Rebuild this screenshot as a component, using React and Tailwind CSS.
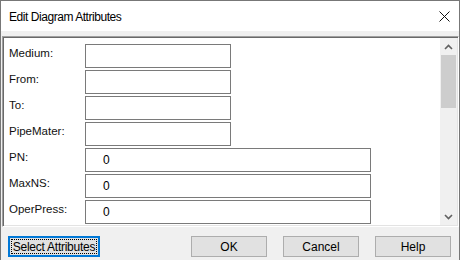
import React from "react";

const rows = [
  { label: "Medium:", value: "", w: "w-[146px]" },
  { label: "From:", value: "", w: "w-[146px]" },
  { label: "To:", value: "", w: "w-[146px]" },
  { label: "PipeMater:", value: "", w: "w-[146px]" },
  { label: "PN:", value: "0", w: "w-[286px]" },
  { label: "MaxNS:", value: "0", w: "w-[286px]" },
  { label: "OperPress:", value: "0", w: "w-[286px]" },
];

function Btn({ children, focused }) {
  if (focused) {
    return (
      <div className="h-[21px] w-[92px] border-2 border-[#0078d7] bg-[#e1e1e1] p-[1px]">
        <div className="flex h-full w-full items-center justify-center overflow-visible whitespace-nowrap border border-dotted border-black text-[12px] leading-none tracking-[-0.25px] text-black">
          {children}
        </div>
      </div>
    );
  }
  return (
    <div className="flex h-[21px] w-[76px] items-center justify-center whitespace-nowrap border border-[#adadad] bg-[#e1e1e1] text-[12px] leading-none text-black">
      {children}
    </div>
  );
}

export default function App() {
  return (
    <div
      className="flex h-[260px] w-[460px] flex-col overflow-hidden border-x border-t border-[#777777] bg-[#f0f0f0]"
      style={{ fontFamily: '"Liberation Sans", Arial, sans-serif' }}
    >
      <div className="flex h-[30px] shrink-0 items-center justify-between bg-white pl-[8px] pr-[9px]">
        <span className="pt-[1px] text-[12px] tracking-[-0.45px] text-black">Edit Diagram Attributes</span>
        <svg width="11" height="11" viewBox="0 0 11 11" className="mt-[1px]">
          <path d="M0.5 0.5 L10.5 10.5 M10.5 0.5 L0.5 10.5" stroke="#111" strokeWidth="1" />
        </svg>
      </div>
      <div className="h-[5px] shrink-0" />
      <div className="ml-[1px] flex h-[191px] shrink-0 border border-[#a0a0a0] border-b-white border-r-white bg-white shadow-[inset_1px_1px_0_#696969,inset_-1px_-1px_0_#e3e3e3] p-[1px]">
        <div className="flex flex-1 flex-col gap-[2px] overflow-hidden pl-[5px] pt-[6px]">
          {rows.map((r) => (
            <div key={r.label} className="flex h-[24px] shrink-0 items-start">
              <div className="w-[76px] pt-[2px] text-[11.5px] leading-[14px] text-[#111]">{r.label}</div>
              <div className={`flex h-[24px] items-center border border-[#7a7a7a] bg-white pl-[17px] text-[12px] text-black ${r.w}`}>
                {r.value}
              </div>
            </div>
          ))}
        </div>
        <div className="flex w-[17px] shrink-0 flex-col bg-[#f0f0f0]">
          <div className="flex h-[17px] items-center justify-center">
            <svg width="9" height="6" viewBox="0 0 9 6">
              <path d="M1 5 L4.5 1.5 L8 5" fill="none" stroke="#606060" strokeWidth="1.6" />
            </svg>
          </div>
          <div className="mx-[1px] h-[53px] bg-[#cdcdcd]" />
          <div className="flex-1" />
          <div className="flex h-[17px] items-center justify-center">
            <svg width="9" height="6" viewBox="0 0 9 6">
              <path d="M1 1 L4.5 4.5 L8 1" fill="none" stroke="#606060" strokeWidth="1.6" />
            </svg>
          </div>
        </div>
      </div>
      <div className="flex flex-1 items-start pl-[7px] pr-[8px] pt-[9px]">
        <Btn focused>Select Attributes</Btn>
        <div className="flex-1" />
        <div className="flex gap-[16px]">
          <Btn>OK</Btn>
          <Btn>Cancel</Btn>
          <Btn>Help</Btn>
        </div>
      </div>
    </div>
  );
}
